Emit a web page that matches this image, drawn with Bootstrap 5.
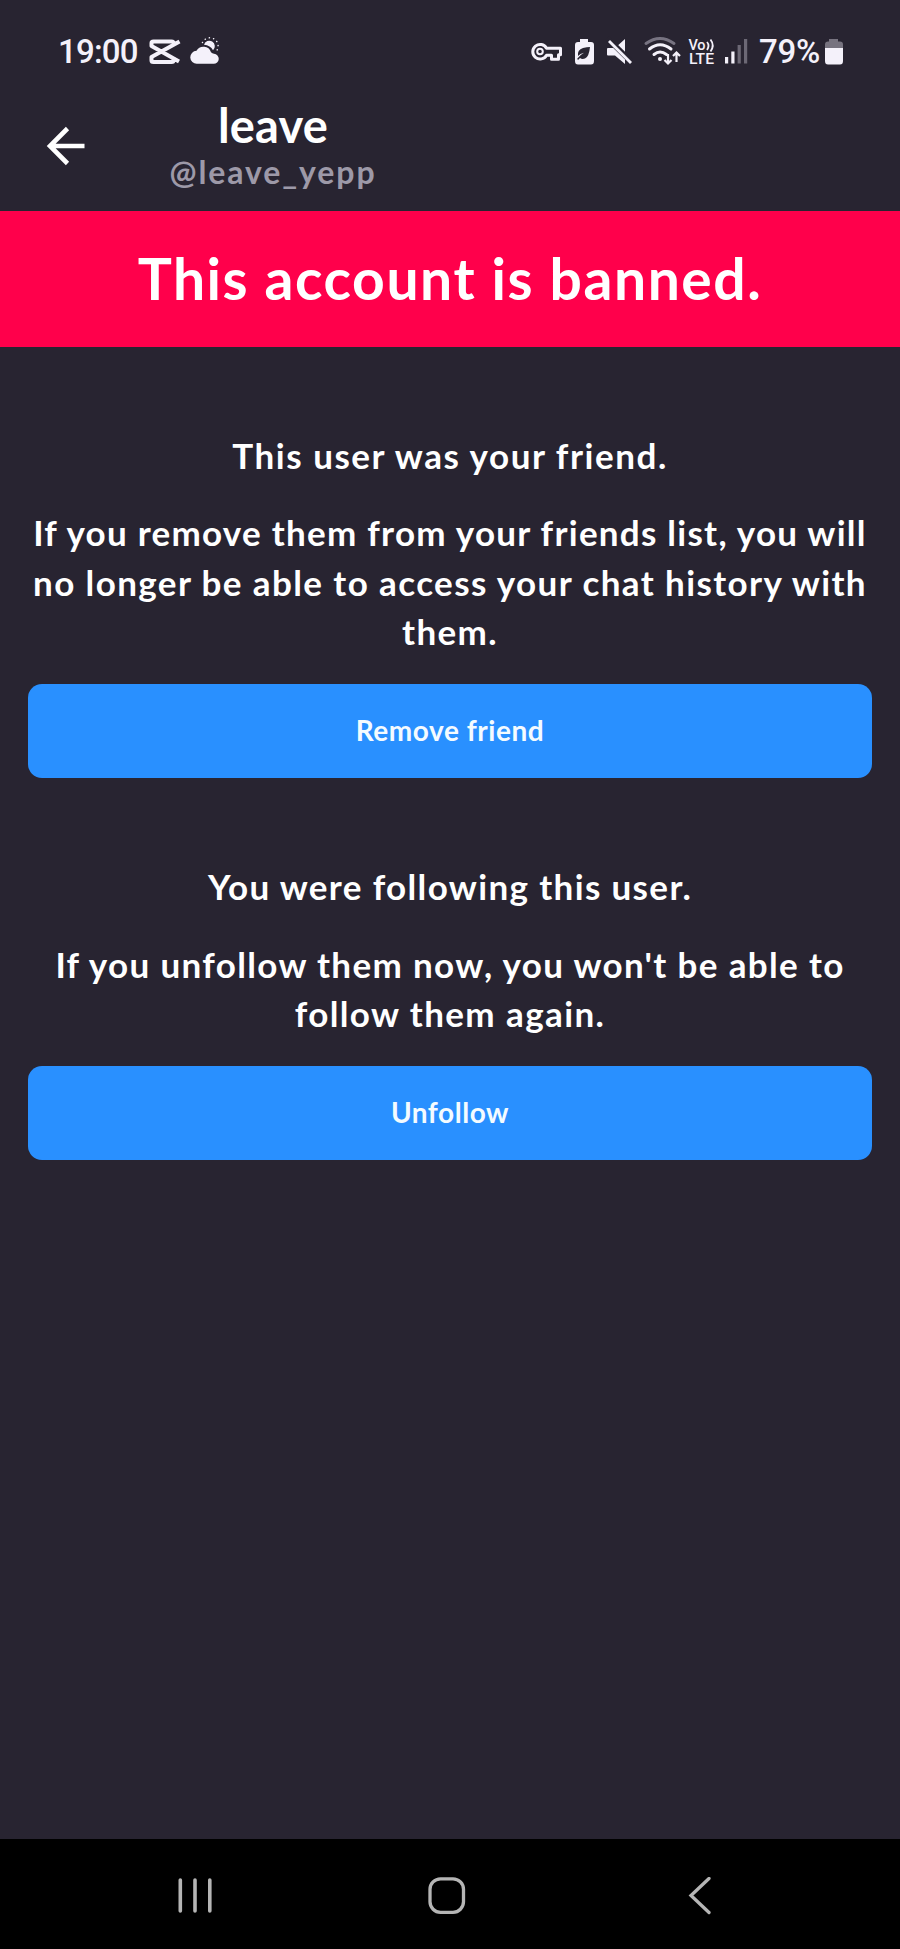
<!DOCTYPE html>
<html lang="en">
<head>
<meta charset="utf-8">
<meta name="viewport" content="width=device-width, initial-scale=1">
<title>leave</title>
<link href="https://cdn.jsdelivr.net/npm/bootstrap@5.3.0/dist/css/bootstrap.min.css" rel="stylesheet">
<style>
body{background:#282431;color:#fff;font-family:Lato,sans-serif;font-weight:700}
.phone{height:1949px;overflow:hidden}
.status{height:102px;padding:0 56px 0 58px;font-family:Roboto,sans-serif;font-weight:500;color:#f4f1fa}
.status svg{display:block;flex:none}
.clock{font-size:33px;line-height:102px;letter-spacing:-.8px;padding-top:1px;width:82px}
.charge{font-size:33px;line-height:102px;letter-spacing:-.3px;padding-top:1px;margin-left:2px}
.topbar{height:109px;padding-left:44px}
.names{width:210px;margin-left:80px}
.title-name{font-size:47px;line-height:46px;letter-spacing:.2px}
.handle{font-size:32px;line-height:47px;letter-spacing:1.9px;color:#9d99a8}
.banner{height:136px;background:#ff004b;font-size:57px;line-height:134px;letter-spacing:1.55px}
.msg{font-size:35px;line-height:49.3px;letter-spacing:1.35px;white-space:nowrap}
.detail{margin:28px 0 27.5px}
.ls-a{letter-spacing:1.54px}
.ls-b{letter-spacing:1.26px}
.ls-c{letter-spacing:1.4px}
.action{height:94px;border-radius:14px;background:#2990ff;color:#f4fbff;font-size:28px;font-weight:700;letter-spacing:.55px;border:0;padding:0 0 2px}
.action:hover{background:#2990ff;color:#f4fbff}
.block1{padding:84px 28px 0}
.block2{padding:84.6px 28px 0}
.sysnav{height:110px;background:#000;padding:38px 188px 0 178px}
.home{margin-left:-6px}
</style>
</head>
<body>
<div class="phone d-flex flex-column">
  <div class="status d-flex align-items-center">
    <span class="clock">19:00</span>
    <svg width="90" height="40" viewBox="139.500 31 90 40">
      <path fill="none" stroke="#f4f1fa" stroke-width="4" stroke-linejoin="round" d="M173 46V43Q173 41.500 171 41.500H153Q151 41.500 151 43V46L178.500 61.500M173 57V60.500Q173 62 171 62H153Q151 62 151 60.500V57L179 41.500"/>
      <path fill="#f4f1fa" d="M196.500 63.800a6.500 6.500 0 0 1-.5-13 8 8 0 0 1 14.500 1.500 5 5 0 0 0 3 1.500 5 5 0 0 1-.5 10z"/>
      <path fill="#f4f1fa" d="M203.500 44.800a5.500 5.500 0 1 1 9 5.500q-2.500-5-9-5.500z"/>
      <path stroke="#f4f1fa" stroke-width="1.500" stroke-linecap="round" stroke-dasharray=".1 4.200" fill="none" d="M202 42.500A8.200 8.200 0 1 1 215.500 51.500"/>
    </svg>
    <svg class="ms-auto" width="230" height="40" viewBox="527 31 230 40">
      <g transform="translate(0 -.8)"><path fill="none" stroke="#f4f1fa" stroke-width="3" stroke-linejoin="round" d="M546.500 49H560.500V55.500H558.500V60H551.500V56H546.500A7.300 7.300 0 1 1 546.500 49z"/>
      <circle cx="540" cy="52.300" r="2.800" fill="none" stroke="#f4f1fa" stroke-width="2"/></g>
      <path fill="#f4f1fa" d="M580 39h8v3h3q3 0 3 3v16q0 3.500-3 3.500h-13q-3 0-3-3.500V45q0-3 3-3h2z"/>
      <path fill="#282431" d="M578 56q-1-6 5-8 4-1 7-1-1 10-5 11.500-3 1-5-.5l-2 2-.8-1.200q3-4 6.800-6-4 1-6 3.200z"/>
      <path fill="#f4f1fa" d="M608 48h7l10-9v25l-10-8.500h-7q-1 0-1-1V49q0-1 1-1z"/>
      <path stroke="#282431" stroke-width="5.500" d="M607 38 631 61.500"/><path stroke="#f4f1fa" stroke-width="2.800" d="M609 41 631 63"/>
      <g fill="none" stroke-width="3" stroke-linecap="round"><path stroke="#777381" d="M646 43.500Q660 33.500 674 43.500"/><path stroke="#f4f1fa" d="M649.500 49Q660 40.500 671 49M654 54.500Q660 49.500 666.500 54.500"/></g>
      <circle cx="660" cy="59" r="2" fill="#f4f1fa"/>
      <path fill="none" stroke="#f4f1fa" stroke-width="2.200" d="M668 54V63.500M664.500 60 668 63.500 671.500 60M676.500 62V52.500M673 56 676.500 52.500 680 56"/>
      <g fill="#f4f1fa" font-family="Roboto,sans-serif" font-weight="500" font-size="14.500"><text x="688.500" y="50" textLength="17">Vo</text><text x="689" y="64.300" textLength="25" lengthAdjust="spacingAndGlyphs" font-size="15.500">LTE</text></g>
      <path fill="none" stroke="#f4f1fa" stroke-width="1.800" d="M707 42Q710 45.500 707 50M710.500 39.500Q715 45.500 710.500 51.500"/>
      <path fill="#f4f1fa" d="M725 57h3.200v6.500H725zM731.300 51.500h3.200v12h-3.200z"/><path fill="#6c6875" d="M737.600 45h3.200v18.500h-3.200zM744 39h3.200v24.500H744z"/>
    </svg>
    <span class="charge">79%</span>
    <svg class="ms-1" width="20" height="28" viewBox="824 37 20 28">
      <path fill="#77737f" d="M829 39h9v2.500h2q3 0 3 3V50H825v-5.500q0-3 3-3h1z"/><path fill="#f4f1fa" d="M825 48h18v13q0 3.500-3 3.500h-12q-3 0-3-3.500z"/>
    </svg>
  </div>

  <header class="topbar d-flex">
    <svg class="mt-4" width="44" height="40" viewBox="44 126 44 40"><path fill="none" stroke="#fff" stroke-width="4.600" d="M84.500 146H50M67.500 128.500 50 146 67.500 163.500"/></svg>
    <div class="names text-center text-nowrap">
      <div class="title-name">leave</div>
      <div class="handle">@leave_yepp</div>
    </div>
  </header>

  <div class="banner text-center">This account is banned.</div>

  <section class="block1 text-center">
    <p class="msg ls-a mb-0">This user was your friend.</p>
    <p class="msg detail"><span class="ls-b">If you remove them from your friends list, you will</span><br><span class="ls-c">no longer be able to access your chat history with</span><br>them.</p>
    <button class="btn action w-100 d-block">Remove friend</button>
  </section>

  <section class="block2 text-center">
    <p class="msg mb-0">You were following this user.</p>
    <p class="msg detail">If you unfollow them now, you won't be able to<br><span class="ls-c">follow them again.</span></p>
    <button class="btn action w-100 d-block">Unfollow</button>
  </section>

  <nav class="sysnav d-flex justify-content-between align-items-start mt-auto">
    <svg width="34" height="38" viewBox="0 0 34 38"><path stroke="#b5b5b5" stroke-width="3.600" stroke-linecap="round" d="M2.300 3V34M17 3V34M31.800 3V34"/></svg>
    <svg class="home" width="38" height="38" viewBox="0 0 38 38"><rect x="2" y="1.800" width="33.500" height="33.500" rx="10.500" fill="none" stroke="#b5b5b5" stroke-width="3.300"/></svg>
    <svg width="24" height="38" viewBox="0 0 24 38"><path fill="none" stroke="#b5b5b5" stroke-width="3.300" stroke-linecap="round" d="M21 1.500 3 18.500 21 35.500"/></svg>
  </nav>
</div>
<script src="https://cdn.jsdelivr.net/npm/bootstrap@5.3.0/dist/js/bootstrap.bundle.min.js"></script>
</body>
</html>
